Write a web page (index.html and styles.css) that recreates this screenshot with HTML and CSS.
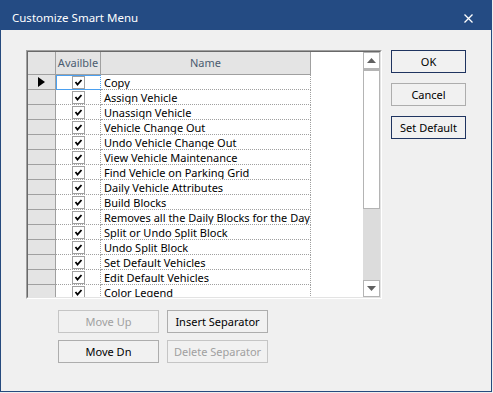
FILE: index.html
```html
<!DOCTYPE html>
<html>
<head>
<meta charset="utf-8">
<link rel="stylesheet" href="styles.css">
</head>
<body>
<div class="dialog">
  <div class="titlebar">
    <span class="title">Customize Smart Menu</span>
    <svg class="close" width="9" height="9" viewBox="0 0 9 9"><path d="M0.5 0.5 L8.5 8.5 M8.5 0.5 L0.5 8.5" stroke="#fff" stroke-width="1.3" fill="none"/></svg>
  </div>
  <div class="content">
    <div class="left">
      <div class="grid">
        <div class="grid-inner">
          <div class="table">
            <div class="hrow">
              <div class="hcell rh"></div>
              <div class="hcell av">Availble</div>
              <div class="hcell nm">Name</div>
            </div>
            <div class="row current">
              <div class="cell rh"><svg width="7" height="10" viewBox="0 0 7 10"><path d="M0 0 L7 5 L0 10 Z" fill="#000"/></svg></div>
              <div class="cell av focus"><span class="cb"><svg width="11" height="11" viewBox="0 0 11 11"><path d="M2.5 5 L4.5 7.5 L8.5 3" stroke="#000" stroke-width="1.8" fill="none"/></svg></span></div>
              <div class="cell nm">Copy</div>
            </div>
            <div class="row"><div class="cell rh"></div><div class="cell av"><span class="cb"><svg width="11" height="11" viewBox="0 0 11 11"><path d="M2.5 5 L4.5 7.5 L8.5 3" stroke="#000" stroke-width="1.8" fill="none"/></svg></span></div><div class="cell nm">Assign Vehicle</div></div>
            <div class="row"><div class="cell rh"></div><div class="cell av"><span class="cb"><svg width="11" height="11" viewBox="0 0 11 11"><path d="M2.5 5 L4.5 7.5 L8.5 3" stroke="#000" stroke-width="1.8" fill="none"/></svg></span></div><div class="cell nm">Unassign Vehicle</div></div>
            <div class="row"><div class="cell rh"></div><div class="cell av"><span class="cb"><svg width="11" height="11" viewBox="0 0 11 11"><path d="M2.5 5 L4.5 7.5 L8.5 3" stroke="#000" stroke-width="1.8" fill="none"/></svg></span></div><div class="cell nm">Vehicle Change Out</div></div>
            <div class="row"><div class="cell rh"></div><div class="cell av"><span class="cb"><svg width="11" height="11" viewBox="0 0 11 11"><path d="M2.5 5 L4.5 7.5 L8.5 3" stroke="#000" stroke-width="1.8" fill="none"/></svg></span></div><div class="cell nm">Undo Vehicle Change Out</div></div>
            <div class="row"><div class="cell rh"></div><div class="cell av"><span class="cb"><svg width="11" height="11" viewBox="0 0 11 11"><path d="M2.5 5 L4.5 7.5 L8.5 3" stroke="#000" stroke-width="1.8" fill="none"/></svg></span></div><div class="cell nm">View Vehicle Maintenance</div></div>
            <div class="row"><div class="cell rh"></div><div class="cell av"><span class="cb"><svg width="11" height="11" viewBox="0 0 11 11"><path d="M2.5 5 L4.5 7.5 L8.5 3" stroke="#000" stroke-width="1.8" fill="none"/></svg></span></div><div class="cell nm">Find Vehicle on Parking Grid</div></div>
            <div class="row"><div class="cell rh"></div><div class="cell av"><span class="cb"><svg width="11" height="11" viewBox="0 0 11 11"><path d="M2.5 5 L4.5 7.5 L8.5 3" stroke="#000" stroke-width="1.8" fill="none"/></svg></span></div><div class="cell nm">Daily Vehicle Attributes</div></div>
            <div class="row"><div class="cell rh"></div><div class="cell av"><span class="cb"><svg width="11" height="11" viewBox="0 0 11 11"><path d="M2.5 5 L4.5 7.5 L8.5 3" stroke="#000" stroke-width="1.8" fill="none"/></svg></span></div><div class="cell nm">Build Blocks</div></div>
            <div class="row"><div class="cell rh"></div><div class="cell av"><span class="cb"><svg width="11" height="11" viewBox="0 0 11 11"><path d="M2.5 5 L4.5 7.5 L8.5 3" stroke="#000" stroke-width="1.8" fill="none"/></svg></span></div><div class="cell nm">Removes all the Daily Blocks for the Day</div></div>
            <div class="row"><div class="cell rh"></div><div class="cell av"><span class="cb"><svg width="11" height="11" viewBox="0 0 11 11"><path d="M2.5 5 L4.5 7.5 L8.5 3" stroke="#000" stroke-width="1.8" fill="none"/></svg></span></div><div class="cell nm">Split or Undo Split Block</div></div>
            <div class="row"><div class="cell rh"></div><div class="cell av"><span class="cb"><svg width="11" height="11" viewBox="0 0 11 11"><path d="M2.5 5 L4.5 7.5 L8.5 3" stroke="#000" stroke-width="1.8" fill="none"/></svg></span></div><div class="cell nm">Undo Split Block</div></div>
            <div class="row"><div class="cell rh"></div><div class="cell av"><span class="cb"><svg width="11" height="11" viewBox="0 0 11 11"><path d="M2.5 5 L4.5 7.5 L8.5 3" stroke="#000" stroke-width="1.8" fill="none"/></svg></span></div><div class="cell nm">Set Default Vehicles</div></div>
            <div class="row"><div class="cell rh"></div><div class="cell av"><span class="cb"><svg width="11" height="11" viewBox="0 0 11 11"><path d="M2.5 5 L4.5 7.5 L8.5 3" stroke="#000" stroke-width="1.8" fill="none"/></svg></span></div><div class="cell nm">Edit Default Vehicles</div></div>
            <div class="row"><div class="cell rh"></div><div class="cell av"><span class="cb"><svg width="11" height="11" viewBox="0 0 11 11"><path d="M2.5 5 L4.5 7.5 L8.5 3" stroke="#000" stroke-width="1.8" fill="none"/></svg></span></div><div class="cell nm">Color Legend</div></div>
          </div>
          <div class="scroll">
            <div class="sbtn"><svg width="9" height="5" viewBox="0 0 9 5"><path d="M0 5 L4.5 0 L9 5 Z" fill="#606060"/></svg></div>
            <div class="thumb"></div>
            <div class="track"></div>
            <div class="sbtn"><svg width="9" height="5" viewBox="0 0 9 5"><path d="M0 0 L9 0 L4.5 5 Z" fill="#606060"/></svg></div>
          </div>
        </div>
      </div>
      <div class="bottom">
        <button class="btn wide" disabled>Move Up</button>
        <button class="btn wide">Insert Separator</button>
        <button class="btn wide">Move Dn</button>
        <button class="btn wide" disabled>Delete Separator</button>
      </div>
    </div>
    <div class="right">
      <button class="btn side dark">OK</button>
      <button class="btn side">Cancel</button>
      <button class="btn side dark">Set Default</button>
    </div>
  </div>
</div>
</body>
</html>
```

FILE: styles.css
```css
html, body {
  margin: 0;
  padding: 0;
  background: #eeeeee;
}
body {
  font-family: "Noto Sans", "Open Sans", sans-serif;
  font-size: 11px;
  line-height: 14px;
}
.dialog {
  width: 492px;
  height: 392px;
  box-sizing: border-box;
  background: #f0f0f0;
  border: 1px solid #264a7e;
  border-top: none;
  display: flex;
  flex-direction: column;
}
.titlebar {
  height: 30px;
  box-sizing: border-box;
  background: #244b83;
  margin: 0 -1px;
  display: flex;
  align-items: center;
  justify-content: space-between;
  padding: 6px 19px 0 12px;
  color: #fff;
  flex: none;
}
.title {
  font-size: 11.5px;
}
.close {
  display: block;
}
.content {
  display: flex;
  padding: 20px 0 0 25px;
}
.grid {
  width: 356px;
  height: 249px;
  box-sizing: border-box;
  border: 1px solid;
  border-color: #a0a0a0 #ffffff #ffffff #a0a0a0;
  display: flex;
}
.grid-inner {
  flex: 1;
  display: flex;
  border: 1px solid;
  border-color: #696969 #e3e3e3 #e3e3e3 #696969;
  overflow: hidden;
}
.table {
  width: 335px;
  background: #ffffff;
  overflow: hidden;
}
.hrow {
  display: flex;
  height: 23px;
}
.hcell {
  box-sizing: border-box;
  background: #e4e4e4;
  border-right: 1px solid #a0a0a0;
  border-bottom: 1px solid #a0a0a0;
  color: #4b5c70;
  display: flex;
  align-items: center;
  justify-content: center;
}
.rh { width: 28px; flex: none; }
.av { width: 45px; flex: none; }
.nm { width: 210px; flex: none; }
.row {
  display: flex;
  height: 15px;
}
.cell {
  box-sizing: border-box;
  border-right: 1px dotted #a0a0a0;
  border-bottom: 1px dotted #a0a0a0;
  display: flex;
  align-items: center;
  color: #000;
  white-space: nowrap;
  overflow: hidden;
}
.cell.rh {
  background: #e4e4e4;
  border-right: 1px solid #a0a0a0;
  border-bottom: 1px solid #a0a0a0;
  padding-left: 10px;
}
.cell.av {
  justify-content: center;
}
.cell.av.focus {
  border: 1px solid #4ba0f0;
  border-right-style: dotted;
}
.cell.nm {
  padding: 1px 0 0 3px;
  line-height: 13px;
}
.cb {
  width: 13px;
  height: 13px;
  box-sizing: border-box;
  border: 1px solid #a0a0a0;
  background: #fff;
  display: flex;
  align-items: center;
  justify-content: center;
}
.cb svg { display: block; }
.scroll {
  width: 17px;
  background: #dcdcdc;
  border-left: 1px solid #ffffff;
  display: flex;
  flex-direction: column;
}
.sbtn {
  height: 17px;
  flex: none;
  box-sizing: border-box;
  background: #ffffff;
  border: 1px solid #b4b4b4;
  display: flex;
  align-items: center;
  justify-content: center;
}
.sbtn svg { display: block; }
.thumb {
  height: 140px;
  flex: none;
  box-sizing: border-box;
  background: #ffffff;
  border: 1px solid #b4b4b4;
  border-top-width: 2px;
}
.track { flex: 1; }
.bottom {
  display: grid;
  grid-template-columns: 101px 101px;
  column-gap: 8px;
  row-gap: 7px;
  margin: 11px 0 0 32px;
}
.btn {
  font-family: "Noto Sans", "Open Sans", sans-serif;
  font-size: 11px;
  line-height: 14px;
  color: #000;
  background: #f1f1f1;
  border: 1px solid #adadad;
  height: 23px;
  padding: 0;
  margin: 0;
  box-sizing: border-box;
}
.btn:disabled {
  color: #a0a0a0;
  background: #f1f1f1;
  border-color: #c5c5c5;
}
.right {
  display: flex;
  flex-direction: column;
  gap: 10px;
  margin-left: 9px;
}
.btn.side {
  width: 75px;
  height: 23px;
}
.btn.dark {
  border-color: #1f3460;
}
```
